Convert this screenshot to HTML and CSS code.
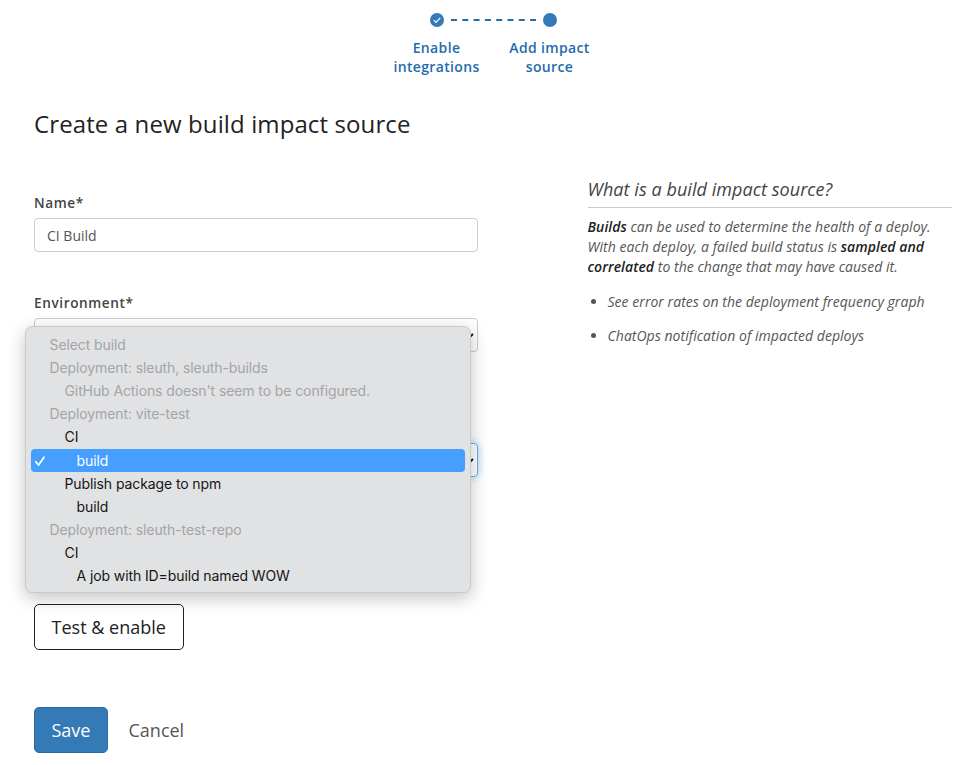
FILE: index.html
```html
<!DOCTYPE html>
<html lang="en">
<head>
<meta charset="utf-8">
<title>Create a new build impact source</title>
<link rel="stylesheet" href="styles.css">
</head>
<body>
<nav class="stepper">
  <div class="step">
    <svg class="dot" viewBox="0 0 14 14"><circle cx="7" cy="7" r="7" fill="#337ab7"/><path d="M3.7 7.1 6 9.4 10.3 4.8" fill="none" stroke="#fff" stroke-width="1.2"/></svg>
    <span>Enable<br>integrations</span>
  </div>
  <svg class="line" viewBox="0 0 86 2"><path d="M1 1H86" stroke="#1f6fb0" stroke-width="2" stroke-dasharray="6 5.3"/></svg>
  <div class="step">
    <svg class="dot" viewBox="0 0 14 14"><circle cx="7" cy="7" r="7" fill="#337ab7"/></svg>
    <span>Add impact<br>source</span>
  </div>
</nav>
<h1><span>Create a new build impact source</span></h1>
<main class="columns">
  <form class="form">
    <div class="field">
      <label for="name">Name*</label>
      <div class="control" id="name"><span>CI Build</span></div>
    </div>
    <div class="field">
      <label for="env">Environment*</label>
      <div class="control select" id="env"><svg class="caret" viewBox="0 0 10 6"><path d="M1 1 5 5 9 1" fill="none" stroke="#111" stroke-width="1.8"/></svg></div>
    </div>
    <div class="field build">
      <div class="control select focused"><svg class="caret" viewBox="0 0 10 6"><path d="M1 1 5 5 9 1" fill="none" stroke="#111" stroke-width="1.8"/></svg></div>
      <ul class="menu">
        <li class="off">Select build</li>
        <li class="off">Deployment: sleuth, sleuth-builds</li>
        <li class="off l1">GitHub Actions doesn't seem to be configured.</li>
        <li class="off">Deployment: vite-test</li>
        <li class="l1">CI</li>
        <li class="l2 selected"><svg class="tick" viewBox="0 0 12 12"><path d="M1.8 6.8 4.6 10 10 2.2" fill="none" stroke="#fff" stroke-width="1.8" stroke-linecap="round" stroke-linejoin="round"/></svg>build</li>
        <li class="l1">Publish package to npm</li>
        <li class="l2">build</li>
        <li class="off">Deployment: sleuth-test-repo</li>
        <li class="l1">CI</li>
        <li class="l2">A job with ID=build named WOW</li>
      </ul>
    </div>
    <button type="button" class="btn test"><span>Test &amp; enable</span></button>
    <div class="actions">
      <button type="button" class="btn save"><span>Save</span></button>
      <a class="cancel">Cancel</a>
    </div>
  </form>
  <aside class="help">
    <h2><span>What is a build impact source?</span></h2>
    <p><b>Builds</b> can be used to determine the health of a deploy.<br>With each deploy, a failed build status is <b>sampled and</b><br><b>correlated</b> to the change that may have caused it.</p>
    <ul>
      <li>See error rates on the deployment frequency graph</li>
      <li>ChatOps notification of impacted deploys</li>
    </ul>
  </aside>
</main>
</body>
</html>
```

FILE: styles.css
```css
* { box-sizing: border-box; }
body {
  margin: 0;
  height: 765px;
  overflow: hidden;
  background: #fff;
  color: #555;
  font-family: "Open Sans", sans-serif;
  font-size: 14px;
}
svg { display: block; }
.stepper {
  display: flex;
  height: 108px;
  padding: 13px 0 0 380px;
}
.step {
  display: flex;
  flex-direction: column;
  align-items: center;
  width: 113px;
  gap: 11px;
  color: #1f6cac;
  font-size: 14px;
  font-weight: 600;
  line-height: 19px;
  letter-spacing: .35px;
  text-align: center;
  white-space: nowrap;
}
.dot { width: 14px; height: 14px; }
.line { width: 86px; height: 2px; margin: 6px -43px 0; flex: none; }
h1 {
  margin: 0 0 53px 34px;
  color: #222;
  font-size: 24px;
  font-weight: 400;
  line-height: 32px;
  letter-spacing: .11px;
  white-space: nowrap;
}
.columns {
  display: grid;
  grid-template-columns: 444px 364px;
  column-gap: 109.5px;
  padding-left: 34px;
}
.field { height: 100px; }
label {
  display: block;
  height: 25px;
  line-height: 20px;
  font-size: 13.6px;
  font-weight: 600;
  letter-spacing: .6px;
  color: #444;
}
.control {
  display: flex;
  align-items: center;
  height: 34px;
  padding: 1px 12px 0;
  border: 1px solid #ccc;
  border-radius: 4px;
  background: #fff;
}
.select { justify-content: flex-end; padding-right: 3px; }
.focused { border-color: #66afe9; box-shadow: 0 0 8px rgba(102, 175, 233, .6); }
.caret { width: 10px; height: 6px; }
.build { position: relative; height: 210.6px; padding-top: 50px; }
.menu {
  position: absolute;
  top: -67px;
  left: -9px;
  width: 446px;
  height: 267px;
  margin: 0;
  padding: 5.6px 5px;
  border: 1px solid #c9cacb;
  border-radius: 7px;
  background: #e1e2e4;
  box-shadow: 0 5px 18px rgba(0, 0, 0, .24);
  list-style: none;
  font: 14px/23.2px Inter, sans-serif;
  letter-spacing: -.1px;
  color: #151515;
}
.menu li { height: 23.2px; padding-left: 18.5px; border-radius: 4px; white-space: nowrap; }
.menu .off { color: #a4a5a6; }
.menu .l1 { padding-left: 33.5px; }
.menu .l2 { padding-left: 45.5px; }
.menu .selected { position: relative; background: #469eff; color: #fff; }
.tick { position: absolute; left: 3px; top: 6px; width: 12px; height: 12px; }
.btn {
  display: block;
  height: 46.5px;
  padding: 1px 0 0;
  border: 1px solid #222;
  border-radius: 5px;
  background: #fff;
  color: #222;
  font: 400 18px "Open Sans", sans-serif;
}
.test { width: 149.5px; }
.actions { display: flex; align-items: center; gap: 20.5px; margin-top: 56.5px; }
.save { width: 74px; border-color: #2a6aa5; background: #337ab7; color: #fff; }
.cancel { padding-top: 1px; font-size: 18px; }
.help { margin-top: -16px; font-style: italic; white-space: nowrap; }
h2 {
  height: 31px;
  margin: 0 0 9px;
  border-bottom: 1px solid #ccc;
  color: #444;
  font-size: 18px;
  font-weight: 400;
  line-height: 25px;
  letter-spacing: .06px;
}
p { margin: 0; line-height: 20.2px; letter-spacing: .04px; }
b { font-weight: 600; color: #222; }
.help ul { margin: 14px 0 0; padding-left: 20px; line-height: 20px; letter-spacing: .04px; }
.help li { margin-bottom: 14.5px; }
```
